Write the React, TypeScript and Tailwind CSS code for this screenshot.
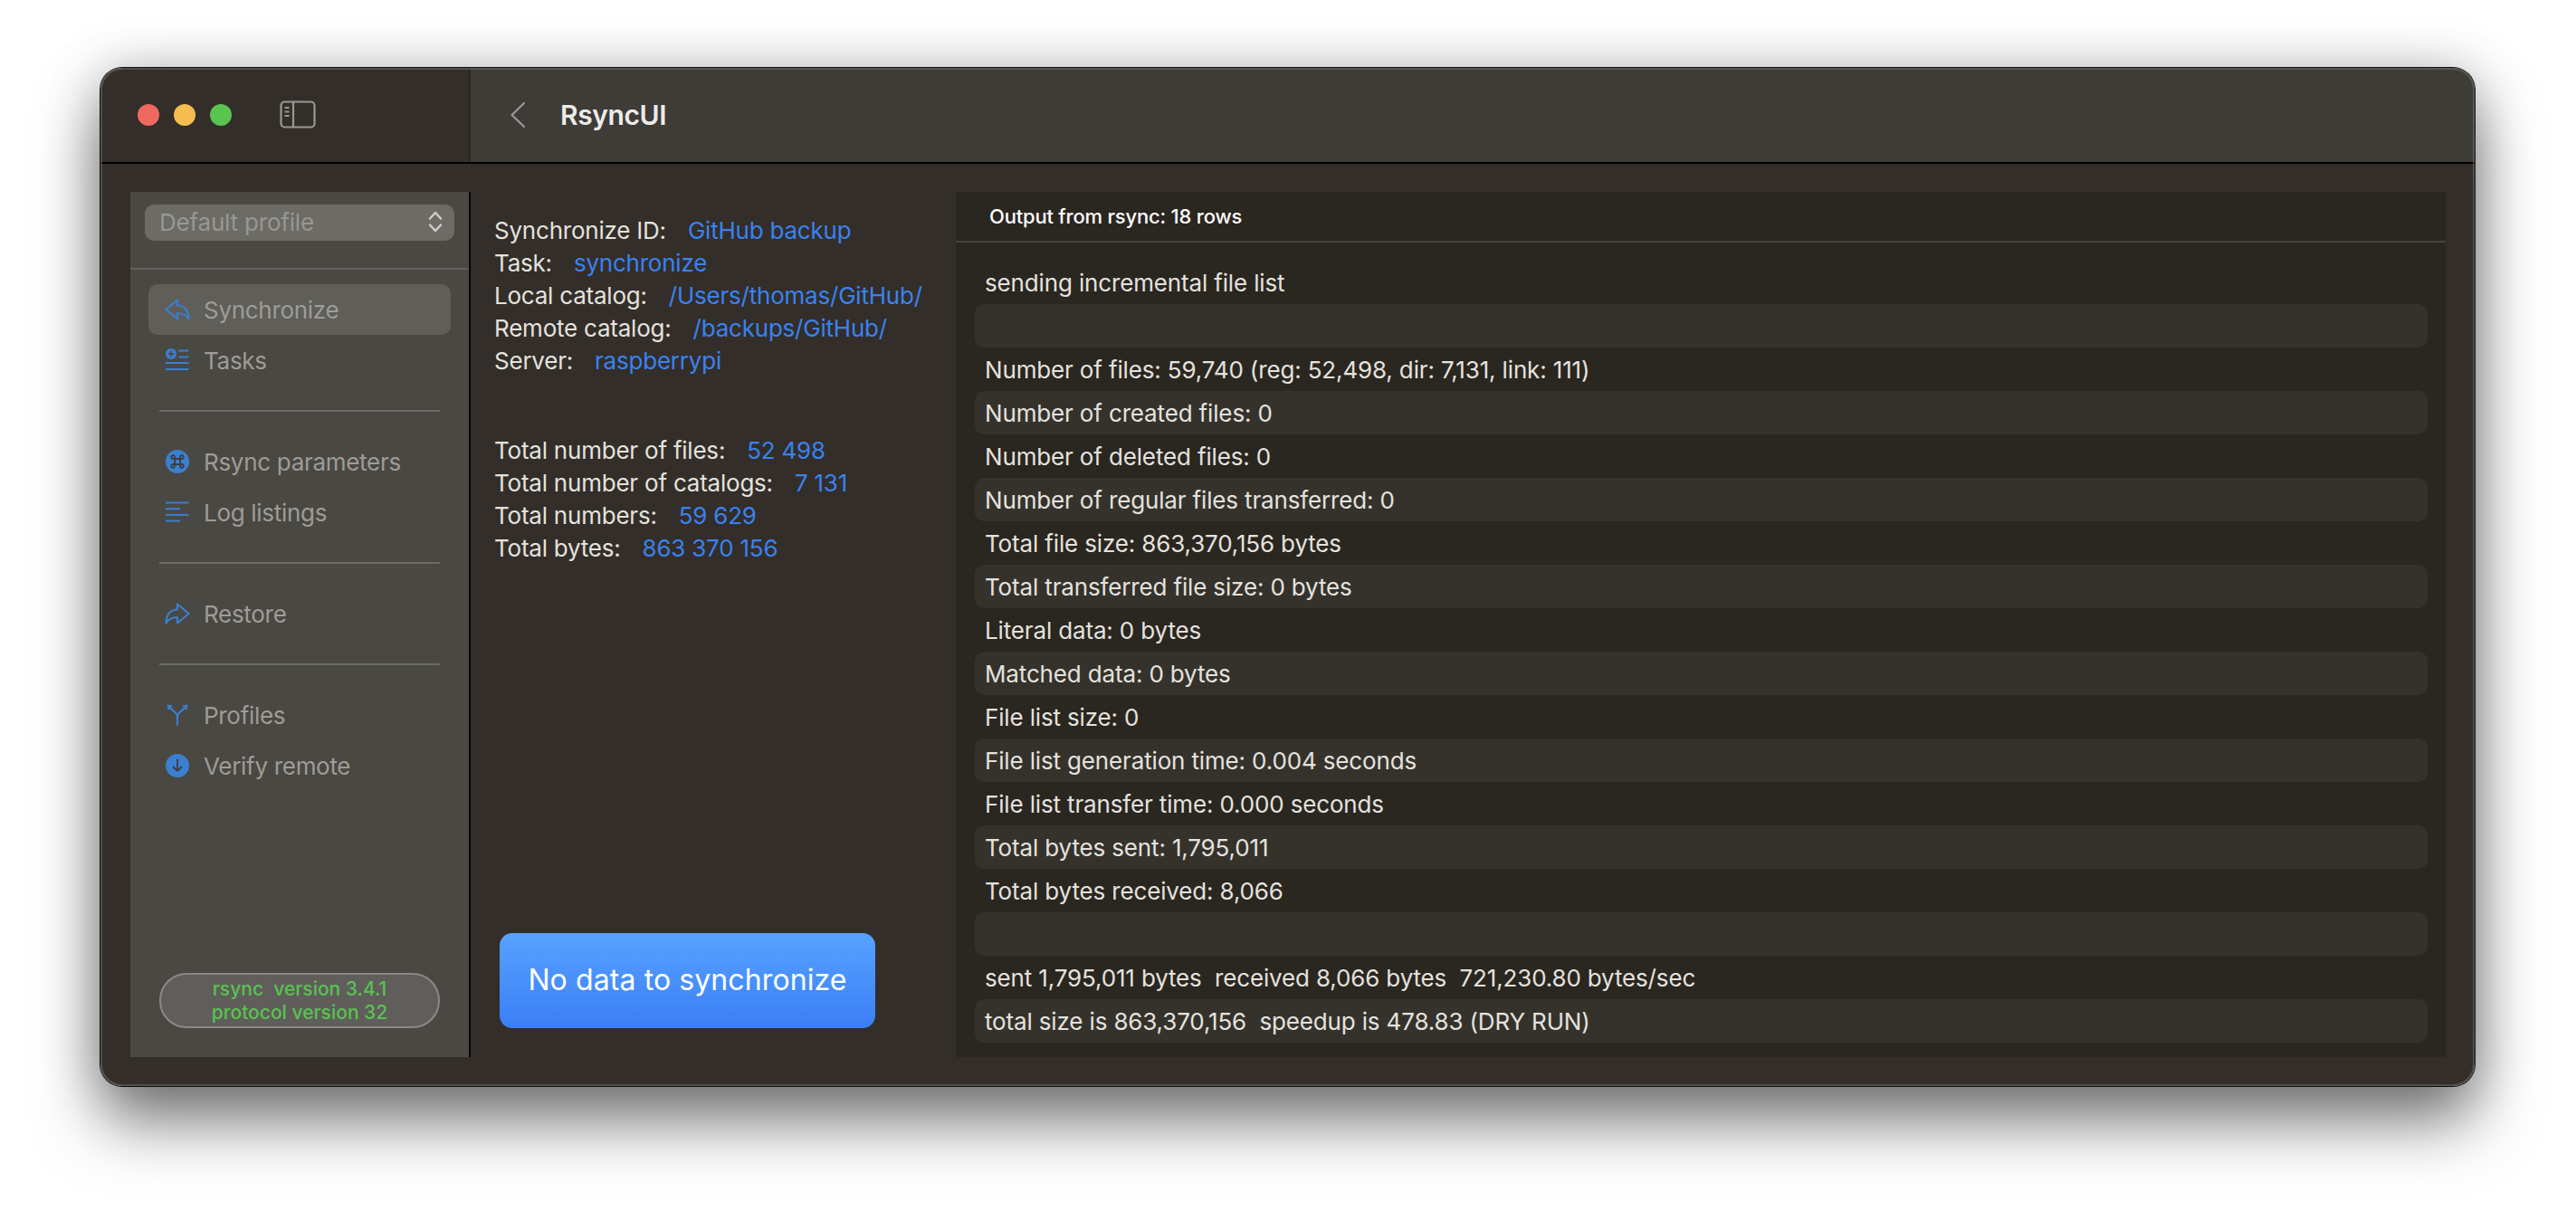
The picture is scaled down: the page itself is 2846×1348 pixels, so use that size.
const FONT = "font-['Inter','Liberation_Sans',sans-serif]";

function Nav({ icon, label, selected }: { icon: React.ReactNode; label: string; selected?: boolean }) {
  return (
    <div className={`mx-[20px] flex h-[56px] items-center gap-[15px] rounded-[10px] pl-[18px] text-[26px] tracking-[-0.3px] text-[#9d9c98] ${selected ? "bg-[#5f5e59]" : ""}`}>
      <span className="flex w-[28px] items-center justify-center text-[#3a7fd0]">{icon}</span>
      <span>{label}</span>
    </div>
  );
}

const Sep = () => <div className="mx-[32px] my-[27px] h-[2px] bg-[#6c6b67]" />;

const ReplyIcon = (
  <svg width="28" height="24" viewBox="0 0 28 24" fill="none" stroke="currentColor" strokeWidth="2.2" strokeLinejoin="round" strokeLinecap="round">
    <path d="M1.500 12 14 1.500V7.500C22 7.500 26.500 13.500 26.500 22.500 23.500 17.500 19.500 16 14 16V22.500Z" />
  </svg>
);
const TasksIcon = (
  <svg width="26" height="26" viewBox="0 0 26 26" fill="currentColor">
    <circle cx="6" cy="6" r="6" />
    <path d="M6 2.500v7M2.500 6h7" stroke="#4a4843" strokeWidth="1.6" />
    <rect x="14.500" y="1.500" width="11" height="2" />
    <rect x="14.500" y="8.500" width="11" height="2" />
    <rect x="0" y="15" width="25.500" height="2" />
    <rect x="0" y="22" width="25.500" height="2" />
  </svg>
);
const CmdIcon = (
  <svg width="26" height="26" viewBox="0 0 26 26">
    <circle cx="13" cy="13" r="13" fill="currentColor" />
    <path d="M10 10h6v6h-6zM10 10H8.200A1.900 1.900 0 1 1 10 8.100zM16 10V8.200A1.900 1.900 0 1 1 17.900 10zM16 16h1.800a1.900 1.900 0 1 1-1.800 1.900zM10 16v1.800A1.900 1.900 0 1 1 8.100 16z" fill="none" stroke="#3f3d3a" strokeWidth="1.8" />
  </svg>
);
const LinesIcon = (
  <svg width="26" height="24" viewBox="0 0 26 24" fill="currentColor">
    <rect x="0" y="0.500" width="25.500" height="2" />
    <rect x="0" y="7.200" width="16" height="2" />
    <rect x="0" y="13.900" width="25.500" height="2" />
    <rect x="0" y="20.600" width="16" height="2" />
  </svg>
);
const RestoreIcon = (
  <svg width="28" height="24" viewBox="0 0 28 24" fill="none" stroke="currentColor" strokeWidth="2.2" strokeLinejoin="round" strokeLinecap="round">
    <path d="M26.500 12 14 1.500V7.500C6 7.500 1.500 13.500 1.500 22.500 4.500 17.500 8.500 16 14 16V22.500Z" />
  </svg>
);
const ForkIcon = (
  <svg width="24" height="24" viewBox="0 0 24 24" fill="none" stroke="currentColor" strokeWidth="2.2">
    <path d="M12 23.500V13.500C12 9.500 7 8 3.500 3.500M12 13.500C12 9.500 17 8 20.500 3.500" />
    <path d="M0.500 0.500 7 1.500 1.500 7ZM23.500 0.500 17 1.500 22.500 7Z" fill="currentColor" stroke="none" />
  </svg>
);
const DownIcon = (
  <svg width="26" height="26" viewBox="0 0 26 26">
    <circle cx="13" cy="13" r="13" fill="currentColor" />
    <path d="M13 6.500v12M8.500 14.500 13 18.800l4.500-4.300" fill="none" stroke="#3f3d3a" strokeWidth="1.800" strokeLinecap="round" strokeLinejoin="round" />
  </svg>
);

const info = [
  ["Synchronize ID:", "GitHub backup"],
  ["Task:", "synchronize"],
  ["Local catalog:", "/Users/thomas/GitHub/"],
  ["Remote catalog:", "/backups/GitHub/"],
  ["Server:", "raspberrypi"],
];
const totals = [
  ["Total number of files:", "52 498"],
  ["Total number of catalogs:", "7 131"],
  ["Total numbers:", "59 629"],
  ["Total bytes:", "863 370 156"],
];
const rows = [
  "sending incremental file list",
  "",
  "Number of files: 59,740 (reg: 52,498, dir: 7,131, link: 111)",
  "Number of created files: 0",
  "Number of deleted files: 0",
  "Number of regular files transferred: 0",
  "Total file size: 863,370,156 bytes",
  "Total transferred file size: 0 bytes",
  "Literal data: 0 bytes",
  "Matched data: 0 bytes",
  "File list size: 0",
  "File list generation time: 0.004 seconds",
  "File list transfer time: 0.000 seconds",
  "Total bytes sent: 1,795,011",
  "Total bytes received: 8,066",
  "",
  "sent 1,795,011 bytes  received 8,066 bytes  721,230.80 bytes/sec",
  "total size is 863,370,156  speedup is 478.83 (DRY RUN)",
];

function Info({ items }: { items: string[][] }) {
  return (
    <div className="flex flex-col">
      {items.map(([k, v]) => (
        <div key={k} className="flex h-[36px] items-center gap-[24px] whitespace-nowrap">
          <span className="text-[#e4e2df]">{k}</span>
          <span className="text-[#3a82f0]">{v}</span>
        </div>
      ))}
    </div>
  );
}

export default function App() {
  return (
    <div className={`${FONT} h-[1348px] w-full overflow-hidden bg-white pl-[111px] pt-[75px]`}>
      <div className="relative h-[1125px] w-[2623px] rounded-[24px] shadow-[0_0_0_1px_#111,0_40px_70px_rgba(0,0,0,0.5),0_0_60px_rgba(0,0,0,0.22)]">
        <div className="flex h-full w-full flex-col overflow-hidden rounded-[24px] bg-[#332e29]">
          <header className="flex h-[106px] border-b-2 border-black">
            <div className="flex w-[409px] items-center border-r-2 border-[#2c2823] pl-[41px]">
              <span className="h-[24px] w-[24px] rounded-full bg-[#ee6a5f]" />
              <span className="ml-[16px] h-[24px] w-[24px] rounded-full bg-[#f5bd4f]" />
              <span className="ml-[16px] h-[24px] w-[24px] rounded-full bg-[#5ac451]" />
              <svg className="ml-[53px]" width="40" height="32" viewBox="0 0 40 32" fill="none" stroke="#9a9895" strokeWidth="2.2">
                <rect x="1.500" y="1.500" width="37" height="28" rx="4" />
                <path d="M15 1.500v28" />
                <path d="M5.500 8h5M5.500 12.500h5M5.500 17h5" strokeWidth="1.800" />
              </svg>
            </div>
            <div className="flex flex-1 items-center bg-[#3e3c37] pl-[43px]">
              <svg width="18" height="30" viewBox="0 0 18 30" fill="none" stroke="#9a9996" strokeWidth="2.200" strokeLinecap="round" strokeLinejoin="round">
                <path d="M16 2 2.500 15 16 28" />
              </svg>
              <span className="ml-[38px] text-[30px] font-semibold tracking-[-0.4px] text-[#ecebe9]">RsyncUI</span>
            </div>
          </header>
          <div className="flex flex-1 pb-[32px] pl-[33px] pr-[32px] pt-[31px]">
            <aside className="flex w-[376px] flex-col border-r-2 border-black bg-[#4a4843] pb-[32px]">
              <div className="mx-[16px] mt-[14px] flex h-[40px] items-center justify-between rounded-[10px] bg-[#6c6b66] pb-[2px] pl-[16px] pr-[13px] text-[26px] tracking-[-0.2px] text-[#989793]">
                <span>Default profile</span>
                <svg width="16" height="24" viewBox="0 0 16 24" fill="none" stroke="#cfcecb" strokeWidth="2.400" strokeLinecap="round" strokeLinejoin="round">
                  <path d="M2 8.500 8 2l6 6.500M2 15.500 8 22l6-6.500" />
                </svg>
              </div>
              <div className="mt-[30px] h-[2px] bg-[#63615d]" />
              <div className="mt-[16px]">
                <Nav icon={ReplyIcon} label="Synchronize" selected />
                <Nav icon={TasksIcon} label="Tasks" />
              </div>
              <Sep />
              <Nav icon={CmdIcon} label="Rsync parameters" />
              <Nav icon={LinesIcon} label="Log listings" />
              <Sep />
              <Nav icon={RestoreIcon} label="Restore" />
              <Sep />
              <Nav icon={ForkIcon} label="Profiles" />
              <Nav icon={DownIcon} label="Verify remote" />
              <div className="mx-[32px] mt-auto flex h-[61px] flex-col items-center justify-center rounded-[30px] border-2 border-[#8a8986] bg-[#5f5e5b] text-[21px] font-medium leading-[26px] text-[#5ac151]">
                <span className="whitespace-pre">rsync  version 3.4.1</span>
                <span>protocol version 32</span>
              </div>
            </aside>
            <section className="flex w-[536px] flex-col pl-[26px] pt-[24px] text-[26px] tracking-[-0.22px]">
              <Info items={info} />
              <div className="mt-[63px]">
                <Info items={totals} />
              </div>
              <div className="mb-[32px] ml-[6px] mt-auto flex h-[105px] w-[415px] items-center justify-center rounded-[14px] bg-gradient-to-b from-[#58a2ff] to-[#3a7ef5] pb-[2px] text-[32px] tracking-[0.1px] text-white">
                No data to synchronize
              </div>
            </section>
            <section className="flex flex-1 flex-col bg-[#2a2620]">
              <div className="flex h-[56px] items-center border-b-2 border-[#46443f] pl-[37px] text-[22px] font-medium tracking-[-0.2px] text-white">
                Output from rsync: 18 rows
              </div>
              <div className="pl-[21px] pr-[20px] pt-[20px]">
                {rows.map((r, i) => (
                  <div key={i} className={`flex h-[48px] items-center whitespace-pre rounded-[10px] pl-[11px] text-[26px] tracking-[-0.15px] text-[#e4e2df] ${i % 2 === 1 ? "bg-[#35322c]" : ""}`}>
                    {r}
                  </div>
                ))}
              </div>
            </section>
          </div>
        </div>
        <div className="pointer-events-none absolute inset-0 rounded-[24px] shadow-[inset_0_0_0_2px_rgba(130,128,122,0.4)]" />
      </div>
    </div>
  );
}
